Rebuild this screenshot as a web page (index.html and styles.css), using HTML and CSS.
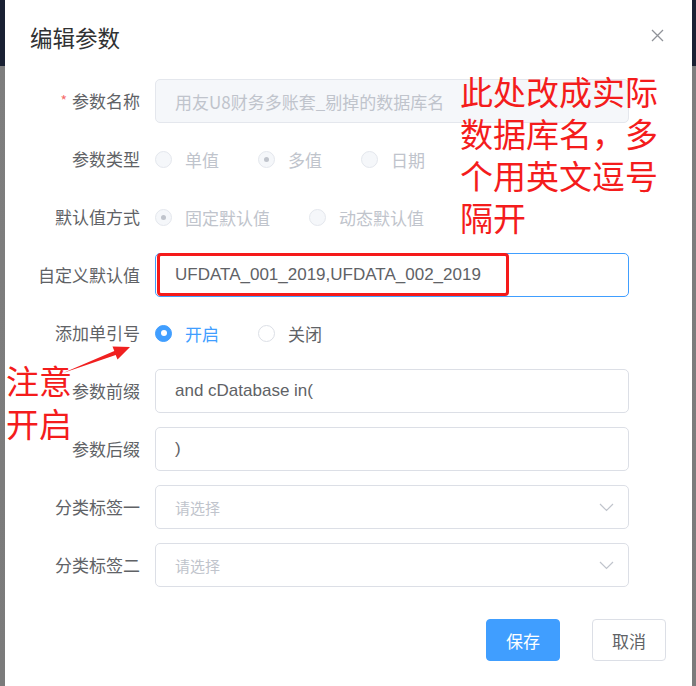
FILE: index.html
```html
<!DOCTYPE html>
<html lang="zh-CN">
<head>
<meta charset="utf-8">
<title>编辑参数</title>
<link rel="stylesheet" href="styles.css">
</head>
<body>
<div class="page">
  <div class="strip strip-left"></div>
  <div class="dialog">
    <div class="header">
      <span class="title">编辑参数</span>
      <svg class="close" width="13" height="13" viewBox="0 0 13 13"><path d="M1 1 L12 12 M12 1 L1 12" stroke="#909399" stroke-width="1.3" fill="none"/></svg>
    </div>
    <div class="form">
      <div class="row">
        <label class="label"><span class="req">*</span>参数名称</label>
        <div class="input disabled">用友U8财务多账套_剔掉的数据库名</div>
      </div>
      <div class="row">
        <label class="label">参数类型</label>
        <div class="radios">
          <span class="radio dis"><span class="dot"></span><span class="rl">单值</span></span>
          <span class="radio dis checked"><span class="dot"></span><span class="rl">多值</span></span>
          <span class="radio dis"><span class="dot"></span><span class="rl">日期</span></span>
        </div>
      </div>
      <div class="row">
        <label class="label">默认值方式</label>
        <div class="radios">
          <span class="radio dis checked"><span class="dot"></span><span class="rl">固定默认值</span></span>
          <span class="radio dis"><span class="dot"></span><span class="rl">动态默认值</span></span>
        </div>
      </div>
      <div class="row">
        <label class="label">自定义默认值</label>
        <div class="input focus latin">UFDATA_001_2019,UFDATA_002_2019</div>
      </div>
      <div class="row">
        <label class="label">添加单引号</label>
        <div class="radios">
          <span class="radio on"><span class="dot"></span><span class="rl">开启</span></span>
          <span class="radio"><span class="dot"></span><span class="rl">关闭</span></span>
        </div>
      </div>
      <div class="row">
        <label class="label">参数前缀</label>
        <div class="input latin">and cDatabase in(</div>
      </div>
      <div class="row">
        <label class="label">参数后缀</label>
        <div class="input latin">)</div>
      </div>
      <div class="row">
        <label class="label">分类标签一</label>
        <div class="input select"><span class="ph">请选择</span><svg width="15" height="9" viewBox="0 0 15 9"><path d="M1 1 L7.5 7.5 L14 1" stroke="#c0c4cc" stroke-width="1.2" fill="none"/></svg></div>
      </div>
      <div class="row">
        <label class="label">分类标签二</label>
        <div class="input select"><span class="ph">请选择</span><svg width="15" height="9" viewBox="0 0 15 9"><path d="M1 1 L7.5 7.5 L14 1" stroke="#c0c4cc" stroke-width="1.2" fill="none"/></svg></div>
      </div>
    </div>
    <div class="footer">
      <button class="btn primary">保存</button>
      <button class="btn">取消</button>
    </div>
  </div>
  <div class="strip strip-right"></div>
</div>
<div class="note note-right">此处改成实际<br>数据库名，多<br>个用英文逗号<br>隔开</div>
<div class="note note-left">注意<br>开启</div>
<div class="redbox"></div>
<svg class="arrow" width="696" height="686" viewBox="0 0 696 686"><polygon points="63,373 114.3,351.1 112.5,346.4 130,347 117.5,359.6 115.7,354.9" fill="#f02020"/></svg>
</body>
</html>
```
FILE: styles.css
```css
html, body {
  margin: 0;
  padding: 0;
  background: #fff;
}
body {
  width: 696px;
  height: 686px;
  overflow: hidden;
  position: relative;
  font-family: "Noto Sans CJK SC", "Liberation Sans", sans-serif;
}
.page {
  display: flex;
  height: 686px;
}
.strip {
  background: linear-gradient(#1a2133 0, #1a2133 66px, #7e7e7e 66px, #7b7b7b 100%);
}
.strip-left { width: 5px; }
.strip-right { width: 4px; }
.dialog {
  width: 687px;
  background: #fff;
  display: flex;
  flex-direction: column;
}
.header {
  display: flex;
  align-items: center;
  justify-content: space-between;
  padding: 20px 28px 0 25px;
  height: 34px;
}
.title {
  font-size: 22.5px;
  line-height: 34px;
  color: #303133;
}
.close {
  margin-top: -4px;
}
.form {
  margin-top: 25px;
  padding-left: 15px;
}
.row {
  display: flex;
  align-items: center;
  height: 44px;
  margin-bottom: 14px;
}
.label {
  width: 120px;
  padding-right: 15px;
  text-align: right;
  font-size: 17px;
  color: #606266;
  line-height: 44px;
}
.req {
  color: #f56c6c;
  font-size: 14px;
  margin-right: 5px;
  position: relative;
  top: -2px;
}
.input {
  width: 474px;
  height: 44px;
  box-sizing: border-box;
  border: 1px solid #dcdfe6;
  border-radius: 5px;
  padding: 0 19px;
  display: flex;
  align-items: center;
  font-size: 17px;
  color: #606266;
  background: #fff;
  white-space: nowrap;
  overflow: hidden;
}
.latin {
  font-family: "Liberation Sans", "Noto Sans CJK SC", sans-serif;
}
.disabled {
  background: #f5f7fa;
  border-color: #e4e7ed;
  color: #c0c4cc;
}
.focus {
  border-color: #409eff;
}
.select {
  justify-content: space-between;
  padding-right: 14px;
}
.ph {
  font-size: 15px;
  color: #c0c4cc;
}
.radios {
  display: flex;
  align-items: center;
}
.radio {
  display: flex;
  align-items: center;
  margin-right: 39px;
  font-size: 17px;
  color: #606266;
}
.dot {
  width: 17px;
  height: 17px;
  box-sizing: border-box;
  border: 1px solid #dcdfe6;
  border-radius: 50%;
  background: #fff;
  margin-right: 13px;
  display: flex;
  align-items: center;
  justify-content: center;
}
.radio.dis {
  color: #c0c4cc;
}
.radio.dis .dot {
  background: #f5f7fa;
  border-color: #e4e7ed;
}
.radio.dis.checked .dot::after {
  content: "";
  width: 5px;
  height: 5px;
  border-radius: 50%;
  background: #c0c4cc;
}
.radio.on {
  color: #409eff;
}
.radio.on .dot {
  background: #409eff;
  border-color: #409eff;
}
.radio.on .dot::after {
  content: "";
  width: 6px;
  height: 6px;
  border-radius: 50%;
  background: #fff;
}
.footer {
  display: flex;
  justify-content: flex-end;
  gap: 32px;
  margin-top: 18px;
  padding-right: 26px;
}
.btn {
  height: 42px;
  width: 74px;
  border: 1px solid #dcdfe6;
  border-radius: 4px;
  background: #fff;
  color: #606266;
  font-family: "Noto Sans CJK SC", sans-serif;
  font-size: 17px;
  padding: 0;
}
.btn.primary {
  background: #409eff;
  border-color: #409eff;
  color: #fff;
}
.note {
  position: absolute;
  color: #f41c1c;
  font-family: "Noto Sans CJK SC", sans-serif;
  font-size: 33px;
}
.note-right {
  left: 460px;
  top: 70px;
  line-height: 42px;
}
.note-left {
  left: 6px;
  top: 359px;
  line-height: 43px;
}
.redbox {
  position: absolute;
  left: 157px;
  top: 253px;
  width: 352px;
  height: 43px;
  box-sizing: border-box;
  border: 3px solid #f51a1a;
  border-radius: 4px;
}
.arrow {
  position: absolute;
  left: 0;
  top: 0;
  pointer-events: none;
}
```
